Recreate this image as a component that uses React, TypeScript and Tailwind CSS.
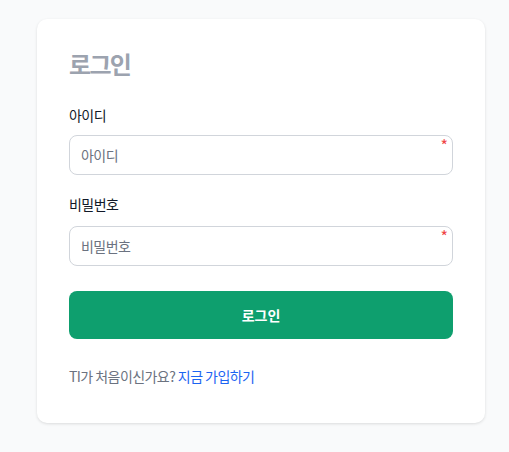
export default function App() {
  return (
    <div className="min-h-[452px] w-full bg-[#f9fafb] pt-[19px] pl-[37px]" style={{ fontFamily: '"Noto Sans CJK KR", "Noto Sans", sans-serif' }}>
      <div className="w-[448px] rounded-[10px] bg-white px-8 pt-[29px] pb-[37px] shadow-[0_1px_3px_rgba(0,0,0,0.12)]">
        <h1 className="text-[24px] leading-8 font-bold tracking-[-0.07em] text-[#9ca3af]">로그인</h1>
        <div className="mt-[25px]">
          <label className="block text-[14px] leading-5 tracking-[-0.04em] text-[#111827] mb-[10px]">아이디</label>
          <div className="relative">
            <input placeholder="아이디" className="block h-10 w-full rounded-lg border border-[#d1d5db] bg-white px-[11px] text-[14px] tracking-[-0.04em] text-[#111827] placeholder:text-[#6b7280] outline-none" />
            <span className="absolute right-[5px] top-[2px] text-[16px] leading-4 text-[#ef4444]">*</span>
          </div>
        </div>
        <div className="mt-[19px]">
          <label className="block text-[14px] leading-5 tracking-[-0.04em] text-[#111827] mb-[12px]">비밀번호</label>
          <div className="relative">
            <input type="text" placeholder="비밀번호" className="block h-10 w-full rounded-lg border border-[#d1d5db] bg-white px-[11px] text-[14px] tracking-[-0.04em] text-[#111827] placeholder:text-[#6b7280] outline-none" />
            <span className="absolute right-[5px] top-[2px] text-[16px] leading-4 text-[#ef4444]">*</span>
          </div>
        </div>
        <button className="mt-[25px] h-12 w-full rounded-lg bg-[#0e9f6e] text-[14px] font-bold text-white">로그인</button>
        <p className="mt-[27px] text-[14px] leading-5 tracking-[-0.04em] text-[#6b7280]">
          TI가 처음이신가요? <a className="text-[#1c64f2]">지금 가입하기</a>
        </p>
      </div>
    </div>
  );
}
